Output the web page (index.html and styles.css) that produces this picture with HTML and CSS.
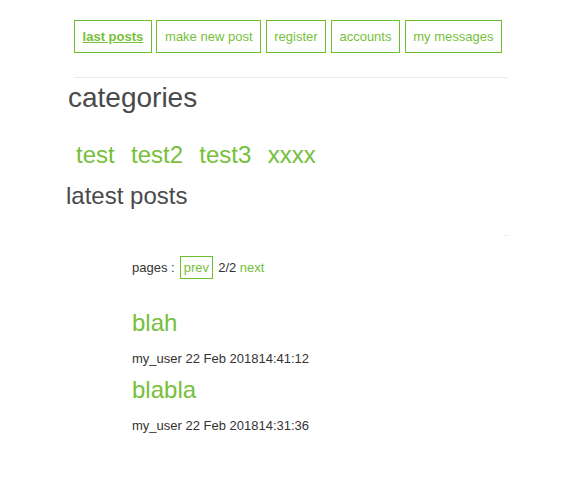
FILE: index.html
```html
<!DOCTYPE html>
<html>
<head>
<meta charset="utf-8">
<link rel="stylesheet" href="styles.css">
</head>
<body>
<div class="page">
  <nav class="nav">
    <a class="nav-btn active" href="#">last posts</a>
    <a class="nav-btn" href="#">make new post</a>
    <a class="nav-btn" href="#">register</a>
    <a class="nav-btn" href="#">accounts</a>
    <a class="nav-btn" href="#">my messages</a>
  </nav>
  <hr class="rule">
  <h1 class="cat-title">categories</h1>
  <div class="cats">
    <a class="cat" href="#">test</a>
    <a class="cat" href="#">test2</a>
    <a class="cat" href="#">test3</a>
    <a class="cat" href="#">xxxx</a>
  </div>
  <h2 class="latest">latest posts</h2>
  <hr class="faint">
  <div class="posts">
    <div class="pager">pages : <a class="prev" href="#">prev</a> 2/2 <a class="next" href="#">next</a></div>
    <div class="post first">
      <a class="post-title" href="#">blah</a>
      <div class="meta">my_user 22 Feb 201814:41:12</div>
    </div>
    <div class="post">
      <a class="post-title" href="#">blabla</a>
      <div class="meta">my_user 22 Feb 201814:31:36</div>
    </div>
  </div>
</div>
</body>
</html>
```
FILE: styles.css
```css
html, body {
  margin: 0;
  padding: 0;
  background: #ffffff;
}
body {
  font-family: "Liberation Sans", Arial, sans-serif;
  color: #333333;
}
a {
  text-decoration: none;
  color: #76bf3b;
}
.page {
  margin-left: 66px;
  width: 442px;
}
.nav {
  padding: 20px 0 0 8px;
  display: flex;
  gap: 4.6px;
}
.nav-btn {
  display: block;
  border: 1px solid #6cc12a;
  padding: 8px 7.6px;
  font-size: 13px;
  line-height: 15px;
}
.nav-btn.active {
  font-weight: bold;
  text-decoration: underline;
}
.rule {
  margin: 24px 0 0 8px;
  width: 434px;
  height: 0;
  border: 0;
  border-top: 1px solid #ebebeb;
}
.cat-title {
  margin: 4px 0 0 2px;
  font-size: 28px;
  line-height: 32px;
  font-weight: normal;
  color: #4a4a4a;
}
.cats {
  margin: 27px 0 0 10px;
  display: flex;
  gap: 16.3px;
}
.cat {
  font-size: 24px;
  line-height: 28px;
}
.latest {
  margin: 13.4px 0 0 0;
  font-size: 24px;
  line-height: 28px;
  font-weight: normal;
  color: #4a4a4a;
}
.faint {
  margin: 25px 0 0 438px;
  width: 4px;
  height: 0;
  border: 0;
  border-top: 1px solid #ececec;
}
.posts {
  padding-left: 66px;
  margin-top: 19.5px;
}
.pager {
  font-size: 13px;
  line-height: 15px;
  color: #333333;
  display: flex;
  align-items: center;
  height: 23px;
  white-space: pre;
}
.prev {
  border: 1px solid #6cc12a;
  padding: 3px;
  margin: 0 1.5px 0 1.5px;
}
.post.first {
  margin-top: 30.3px;
}
.post {
  margin-top: 10px;
}
.post-title {
  display: block;
  font-size: 24px;
  line-height: 28px;
}
.meta {
  margin-top: 13.7px;
  font-size: 13px;
  line-height: 15px;
  color: #333333;
}
```
